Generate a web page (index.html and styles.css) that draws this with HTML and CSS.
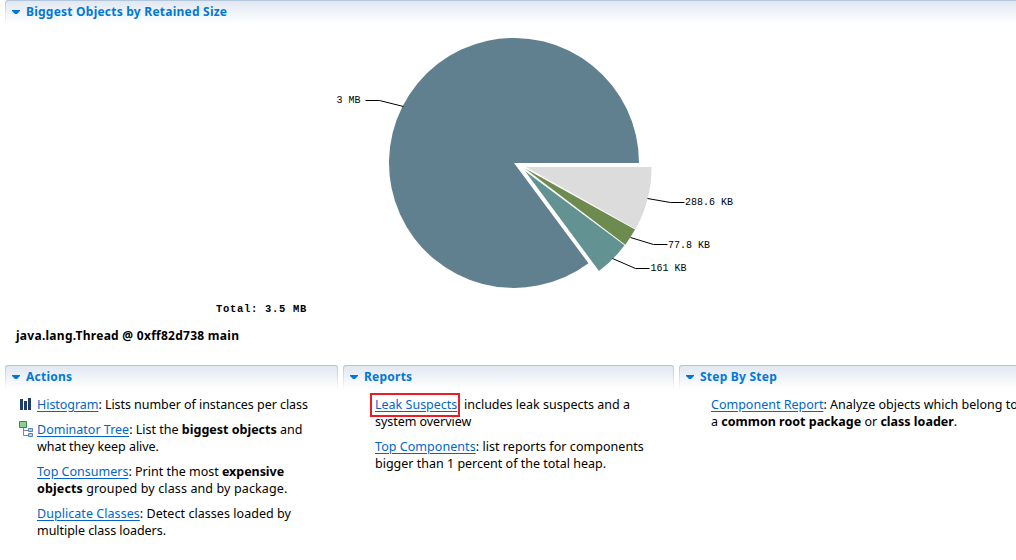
FILE: index.html
```html
<!DOCTYPE html>
<html lang="en">
<head>
<meta charset="utf-8">
<title>Heap Overview</title>
<link rel="stylesheet" href="styles.css">
</head>
<body>
<main class="overview">
  <section class="section biggest">
    <h2 class="bar bar-open"><svg class="twistie" width="8" height="4" viewBox="0 0 8 4"><path d="M0 0H8V1L5 4H3L0 1Z"/></svg><span>Biggest Objects by Retained Size</span></h2>
    <svg class="chart" width="1011" height="294" viewBox="5 25 1011 294">
      <path fill="#607f8f" d="M514 163H639A125 125 0 1 0 588.5 263.3Z"/>
      <path fill="#dcdcdc" d="M526 167H651.5A125 125 0 0 1 635.5 229Z"/>
      <path fill="#6e8b4f" d="M525 168.5L635 229.6A125 125 0 0 1 625.3 244.7Z"/>
      <path fill="#629292" d="M525 171L624.5 245.3A125 125 0 0 1 599 271Z"/>
      <g class="leader">
        <path d="M365.5 100.5H379.5L403.5 106.5"/>
        <path d="M647.5 198.5L670.5 202.5H684.5"/>
        <path d="M630.5 237.5L653.5 244.5H667.5"/>
        <path d="M612.5 258.5L635.5 268.5H649.5"/>
      </g>
      <g class="label">
        <text x="336.5" y="103">3 MB</text>
        <text x="685" y="205">288.6 KB</text>
        <text x="668" y="248">77.8 KB</text>
        <text x="650.5" y="271">161 KB</text>
        <text class="total" x="216" y="312">Total: 3.5 MB</text>
      </g>
    </svg>
    <p class="object">java.lang.Thread @ 0xff82d738 main</p>
  </section>
  <div class="columns">
    <section class="section">
      <h2 class="bar"><svg class="twistie" width="8" height="4" viewBox="0 0 8 4"><path d="M0 0H8V1L5 4H3L0 1Z"/></svg><span>Actions</span></h2>
      <ul class="list">
        <li>
          <svg class="icon" width="14" height="16" viewBox="0 0 14 16"><path fill="#1f3d68" d="M1 3H4V14H1ZM5 5H8V14H5ZM9 2H12V14H9Z"/></svg>
          <p class="snug"><a>Histogram</a>: Lists number of instances per class</p>
        </li>
        <li>
          <svg class="icon" width="14" height="16" viewBox="0 0 14 16"><path fill="none" stroke="#7d8896" d="M4.5 7V14.5H9M4.5 9.5H9"/><path fill="#8bd08b" stroke="#3c8459" d="M.5 .5H7.5V6.5H.5Z"/><path fill="#a9d5f5" stroke="#5484b4" d="M9.5 7.5H13.5V10.5H9.5ZM9.5 12.5H13.5V15.5H9.5Z"/></svg>
          <p><a>Dominator Tree</a>: List the <b>biggest objects</b> and<br><span class="snug">what they keep alive.</span></p>
        </li>
        <li><p><a>Top Consumers</a>: Print the most <b class="snug">expensive</b><br><span class="loose"><b>objects</b> grouped by class and by package.</span></p></li>
        <li><p><span class="wide"><a>Duplicate Classes</a>: Detect classes loaded by</span><br><span class="snug">multiple class loaders.</span></p></li>
      </ul>
    </section>
    <section class="section">
      <h2 class="bar"><svg class="twistie" width="8" height="4" viewBox="0 0 8 4"><path d="M0 0H8V1L5 4H3L0 1Z"/></svg><span>Reports</span></h2>
      <ul class="list">
        <li><p><a class="marked">Leak Suspects</a>: includes leak suspects and a<br><span class="snug">system overview</span></p></li>
        <li><p><span class="wide"><a>Top Components</a>: list reports for components</span><br>bigger than 1 percent of the total heap.</p></li>
      </ul>
    </section>
    <section class="section">
      <h2 class="bar bar-open"><svg class="twistie" width="8" height="4" viewBox="0 0 8 4"><path d="M0 0H8V1L5 4H3L0 1Z"/></svg><span>Step By Step</span></h2>
      <ul class="list">
        <li><p><a>Component Report</a>: Analyze objects which belong to<br>a <b>common root package</b> or <b>class loader</b>.</p></li>
      </ul>
    </section>
  </div>
</main>
</body>
</html>
```
FILE: styles.css
```css
* { box-sizing: border-box; }
body {
  margin: 0;
  background: #fff;
  color: #000;
  font: 12.5px/17px "Noto Sans", "Open Sans", sans-serif;
  overflow: hidden;
}
h2, p, ul { margin: 0; padding: 0; }
.overview { width: 1016px; height: 560px; padding-left: 5px; overflow: hidden; }
.biggest { height: 365px; }
.bar {
  display: flex;
  align-items: center;
  gap: 6px;
  height: 25px;
  padding: 0 0 2px 6px;
  border: 1px solid transparent;
  border-top-color: #b4c6dc;
  border-radius: 3px 3px 0 0;
  background:
    linear-gradient(#e1e8f2, #fff) padding-box,
    linear-gradient(#b4c6dc, #fff) border-box;
  color: #0078d7;
  font-size: 12px;
  font-weight: 700;
  line-height: 17px;
  letter-spacing: .23px;
}
.bar-open { border-right: 0; border-top-right-radius: 0; }
.twistie { fill: #0078d7; }
.chart { display: block; }
.leader { fill: none; stroke: #000; stroke-width: 1; }
.label { font: 10px "Liberation Mono", monospace; }
.total { font-weight: 700; font-size: 10.5px; letter-spacing: .7px; }
.object { padding: 8px 0 0 11px; font-weight: 700; font-size: 12px; letter-spacing: .27px; }
.columns { display: grid; grid-template-columns: 333px 331px 337px; gap: 5px; }
.list { display: flex; flex-direction: column; gap: 8px; padding: 6px 0 0 14px; list-style: none; }
.list li { display: grid; grid-template-columns: 14px auto; column-gap: 4px; white-space: nowrap; }
.list p { grid-column: 2; }
.icon { grid-row: 1; }
.snug { letter-spacing: -.05px; }
.wide { letter-spacing: .05px; }
.loose { letter-spacing: .12px; }
a { color: #0066cc; text-decoration: underline; text-underline-offset: 2px; }
.marked { position: relative; }
.marked::after {
  content: "";
  position: absolute;
  inset: -3px -3px -4px -5px;
  border: 2px solid #ed1c24;
}
```
